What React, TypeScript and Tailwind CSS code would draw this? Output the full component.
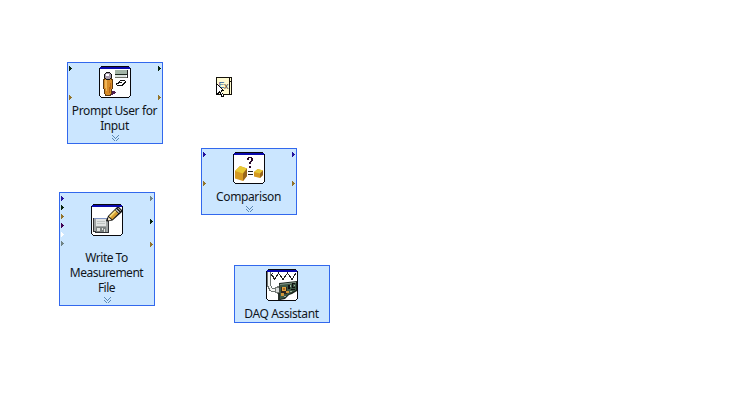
import type { ReactNode } from 'react';

type Pin = { y: number; color: string };

function Arrow({ side, y, color }: Pin & { side: 'left' | 'right' }) {
  return (
    <svg className={side === 'left' ? 'absolute left-px' : 'absolute right-px'} style={{ top: y }} width="3" height="5" shapeRendering="crispEdges">
      <path d="M0 0h1v5h-1zM1 1h1v3h-1zM2 2h1v1h-1z" fill={color} />
    </svg>
  );
}

function Frame({ children }: { children: ReactNode }) {
  return (
    <svg className="block shrink-0" width="32" height="32" viewBox="0 0 32 32" shapeRendering="crispEdges">
      <path d="M2 0h28v1h1v1h1v28h-1v1h-1v1H2v-1H1v-1H0V2h1V1h1z" fill="#08080c" />
      <path d="M2 1h28v1h1v28h-1v1H2v-1H1V2h1z" fill="#fff" />
      <path d="M1 1h30v2H1z" fill="#0808ae" />
      {children}
    </svg>
  );
}

function PromptIcon() {
  return (
    <Frame>
      <path d="M13 25h3v1h1v1h-1v1h-2v1h-4v-1h2v-2h1z" fill="#502050" />
      <path d="M5 12h8v1h1v10h-1v5h-1v2H6v-2H5v-5H4V13h1z" fill="#5a3810" />
      <path d="M6 13h6v1h1v9h-1v5h-1v1H7v-1H6v-5H5v-9h1z" fill="#d78c28" />
      <path d="M6 14h2v11H7v-3H6z" fill="#f1b657" />
      <path d="M11 17h1v6h-1v4h-1v-6h1z" fill="#b76518" />
      <path d="M7 6h4v1h1v1h1v4h-1v1h-1v1H7v-1H6v-1H5V8h1V7h1z" fill="#111" />
      <path d="M7 7h4v1h1v4h-1v1H7v-1H6V8h1z" fill="#a99aac" />
      <path d="M7 8h3v2H7z" fill="#fff" />
      <path d="M16 4h12v4H16z" fill="#a3b5a6" />
      <path d="M16 8h12v1H16z" fill="#1c281e" />
      <path d="M16 9h11v2H16z" fill="#dce3df" />
      <path d="M16 11h12v1H16z" fill="#71746b" />
      <path d="M28 4h1v8h-1z" fill="#222" />
      <path d="M21 14h5v1h1v2h-1v1h-1v1h-1v1h-6v-1h-1v-2h2v-1h1v-1h1z" fill="#111" />
      <path d="M21 15h5v1h-1v1h-1v1h-1v1h-5v-1h2v-1h3v-1h-2z" fill="#fff" />
    </Frame>
  );
}

function Cube({ x, y, width, height }: { x: number; y: number; width: number; height: number }) {
  return (
    <svg x={x} y={y} width={width} height={height} viewBox="0 0 12 12" preserveAspectRatio="none" shapeRendering="auto">
      <path d="M0 4 5 0l7 2v6l-4 4-8-2z" fill="#d59a22" />
      <path d="M0 4 5 0l7 2-4 4z" fill="#e8c935" />
      <path d="m8 6 4-4v6l-4 4z" fill="#98661d" />
    </svg>
  );
}

function ComparisonIcon() {
  return (
    <Frame>
      <path d="M15 5h4v1h1v3h-1v1h-1v2h-2v-2h1V9h1V6h-2v2h-2V6h1zM16 14h2v2h-2z" fill="#280829" />
      <path d="M15 19h5v1h-5zM15 22h5v1h-5z" fill="#222" />
      <Cube x={2} y={14} width={12} height={15} />
      <Cube x={21} y={17} width={9} height={9} />
    </Frame>
  );
}

function WriteIcon() {
  return (
    <Frame>
      <path d="M2 14h16v15H4v-1H2z" fill="#303235" />
      <path d="M3 15h14v13H5v-1H3z" fill="#a0a4a3" />
      <path d="M5 15h10v7H5z" fill="#e1e3e2" />
      <path d="M3 14h13v1H3z" fill="#7f93c5" />
      <path d="M6 17h8v1H6zM6 19h8v1H6z" fill="#bfc4c2" />
      <path d="M5 23h10v5H5z" fill="#7c8180" />
      <path d="M6 24h3v3H6zM11 24h1v2h-1zM13 25h1v3h-1z" fill="#e0e2df" />
      <g shapeRendering="auto">
        <path d="m15 17 2-5 9-9h2l3 3v2l-9.5 8.5-5.5 1z" fill="#111" />
        <path d="m18 12.2 6-6 3.3 3.3-6 6z" fill="#d59d30" />
        <path d="m18 12.2 6-6 1.3 1.3-6 6z" fill="#f4dc7b" />
        <path d="m24.5 5.7.8-.8 3.4 3.4-.8.8z" fill="#e5e5e0" />
        <path d="m26.3 4 1-.3 2.8 2.8-.4 1z" fill="#b7aaa0" />
        <path d="m17.5 13 3 3-3 .5-.7-.7z" fill="#f5e4c3" />
      </g>
    </Frame>
  );
}

function DaqIcon() {
  return (
    <Frame>
      <path d="M5 6V5h1V4h1v1h-1v1zM7 9V7h1v2h1v2H8V9z" fill="#222" />
      <path d="M5 5 8.500 10.500 12.500 4 17 10.500 21.500 4 26 10.500 30 4" fill="none" stroke="#222" />
      <path d="M1 3h4v14h1v2h4v4H5v-1H3v-2H2v-2H1z" fill="#6c7370" />
      <path d="M2 3h2v14h1v2h1v1h4v2H5v-1H4v-2H3v-2H2z" fill="#f4f5f3" />
      <path d="M9 18h2v-1h3v8h-3v-1H9z" fill="#767c78" />
      <path d="M10 19h3v4h-3z" fill="#dadddb" />
      <path d="M12 24h2v7h-2z" fill="#28302b" />
      <g shapeRendering="auto">
        <path d="m13 14 18-2v10l-5 3-3 1-4 4-5 1z" fill="#18231a" />
        <path d="m14 15 16-2v8l-7 4-5 4-4 1z" fill="#3c5844" />
        <path d="m14 15 16-2v1l-16 2z" fill="#879689" />
      </g>
      <path d="M15 18h6v7h-6z" fill="#2d261d" />
      <path d="M16 18h4v4h-4z" fill="#dfa33e" />
      <path d="M17 19h2v2h-2z" fill="#a86924" />
      <path d="M15 24h3v3h-3zM20 22h3v2h-3z" fill="#cf9639" />
      <path d="M22 16h2v4h-2zM26 14h3v1h-2v3h2v1h-3zM25 20h4v1h-4z" fill="#111" />
      <path d="M24 16h1v2h-1zM28 16h1v1h-1zM24 22h2v1h-2zM18 27h2v1h-2z" fill="#9eafa0" />
    </Frame>
  );
}

function ExpressNode({ place, icon, lines, left = [], right = [], expandable = true }: {
  place: string; icon: ReactNode; lines: string[]; left?: Pin[]; right?: Pin[]; expandable?: boolean;
}) {
  return (
    <section className={`absolute flex w-24 flex-col items-center border border-[#3268ed] bg-[#cbe6ff] ${place}`}>
      {left.map((p) => <Arrow key={p.y} side="left" {...p} />)}
      {right.map((p) => <Arrow key={p.y} side="right" {...p} />)}
      {icon}
      <div className="mt-[5px] mr-px whitespace-pre text-center text-[12px] leading-[15px] tracking-[-0.38px] text-[#10151b]">
        {lines.join('\n')}
      </div>
      {expandable && (
        <svg className="absolute bottom-0.5 block" width="7" height="6" viewBox="0 0 7 6" shapeRendering="crispEdges">
          <path d="M0 0h1v1h1v1h1v1h1V2h1V1h1V0h1v1H6v1H5v1H4v1H3V3H2V2H1V1H0zM0 3h1v1h1v1h1v1h1V5h1V4h1V3h1v1H6v1H5v1H2V5H1V4H0z" fill="#5b88b4" />
        </svg>
      )}
    </section>
  );
}

export default function App() {
  return (
    <main className="relative h-[402px] w-[756px] overflow-hidden bg-white font-['Noto_Sans','Open_Sans',sans-serif]">
      <ExpressNode place="left-[67px] top-[62px] h-[82px] pt-[3px]" icon={<PromptIcon />} lines={['Prompt User for', 'Input']}
        left={[{ y: 3, color: '#08240b' }, { y: 32, color: '#93742b' }]}
        right={[{ y: 3, color: '#08240b' }, { y: 32, color: '#93742b' }]} />
      <ExpressNode place="left-[201px] top-[148px] h-[67px] pt-[3px]" icon={<ComparisonIcon />} lines={['Comparison']}
        left={[{ y: 3, color: '#22109b' }, { y: 32, color: '#93742b' }]}
        right={[{ y: 3, color: '#22109b' }, { y: 32, color: '#93742b' }]} />
      <ExpressNode place="left-[59px] top-[192px] h-[114px] pt-[11px] [&>div]:mt-[14px] [&>div]:tracking-[-0.5px]" icon={<WriteIcon />} lines={['Write To', 'Measurement', 'File']}
        left={[{ y: 3, color: '#22109b' }, { y: 12, color: '#08240b' }, { y: 21, color: '#93742b' }, { y: 30, color: '#410052' }, { y: 39, color: '#ffffff' }, { y: 48, color: '#718485' }]}
        right={[{ y: 3, color: '#718485' }, { y: 26, color: '#08240b' }, { y: 49, color: '#93742b' }]} />
      <ExpressNode place="left-[234px] top-[265px] h-[58px] pt-[3px]" icon={<DaqIcon />} lines={['DAQ Assistant']} expandable={false} />
      <svg className="absolute left-[216px] top-[77px]" width="17" height="22" viewBox="0 0 17 22" shapeRendering="crispEdges">
        <path d="M0 0h16v18H0z" fill="#16120b" />
        <path d="M1 1h12v16H1zM14 1h1v3h-1zM14 5h1v12h-1z" fill="#fffbd1" />
        <text x="2.500" y="11" fontSize="9" fill="#305f9f" fontFamily="Liberation Sans">E</text>
        <text x="8" y="12" fontSize="9" fill="#4e3b30" fontFamily="Liberation Sans">x</text>
        <path d="M0 6h1v1h1v1h1v1h1v1h1v1h1v1h1v1h1v1H6v2h1v2h1v2H5v-2H4v-2H3v1H2v1H0z" fill="#080808" />
        <path d="M1 8h1v1h1v1h1v1h1v1h1v1H5v2h1v2h1v2H6v-2H5v-2H4v-1H3v1H2v1H1z" fill="#fff" />
      </svg>
    </main>
  );
}
